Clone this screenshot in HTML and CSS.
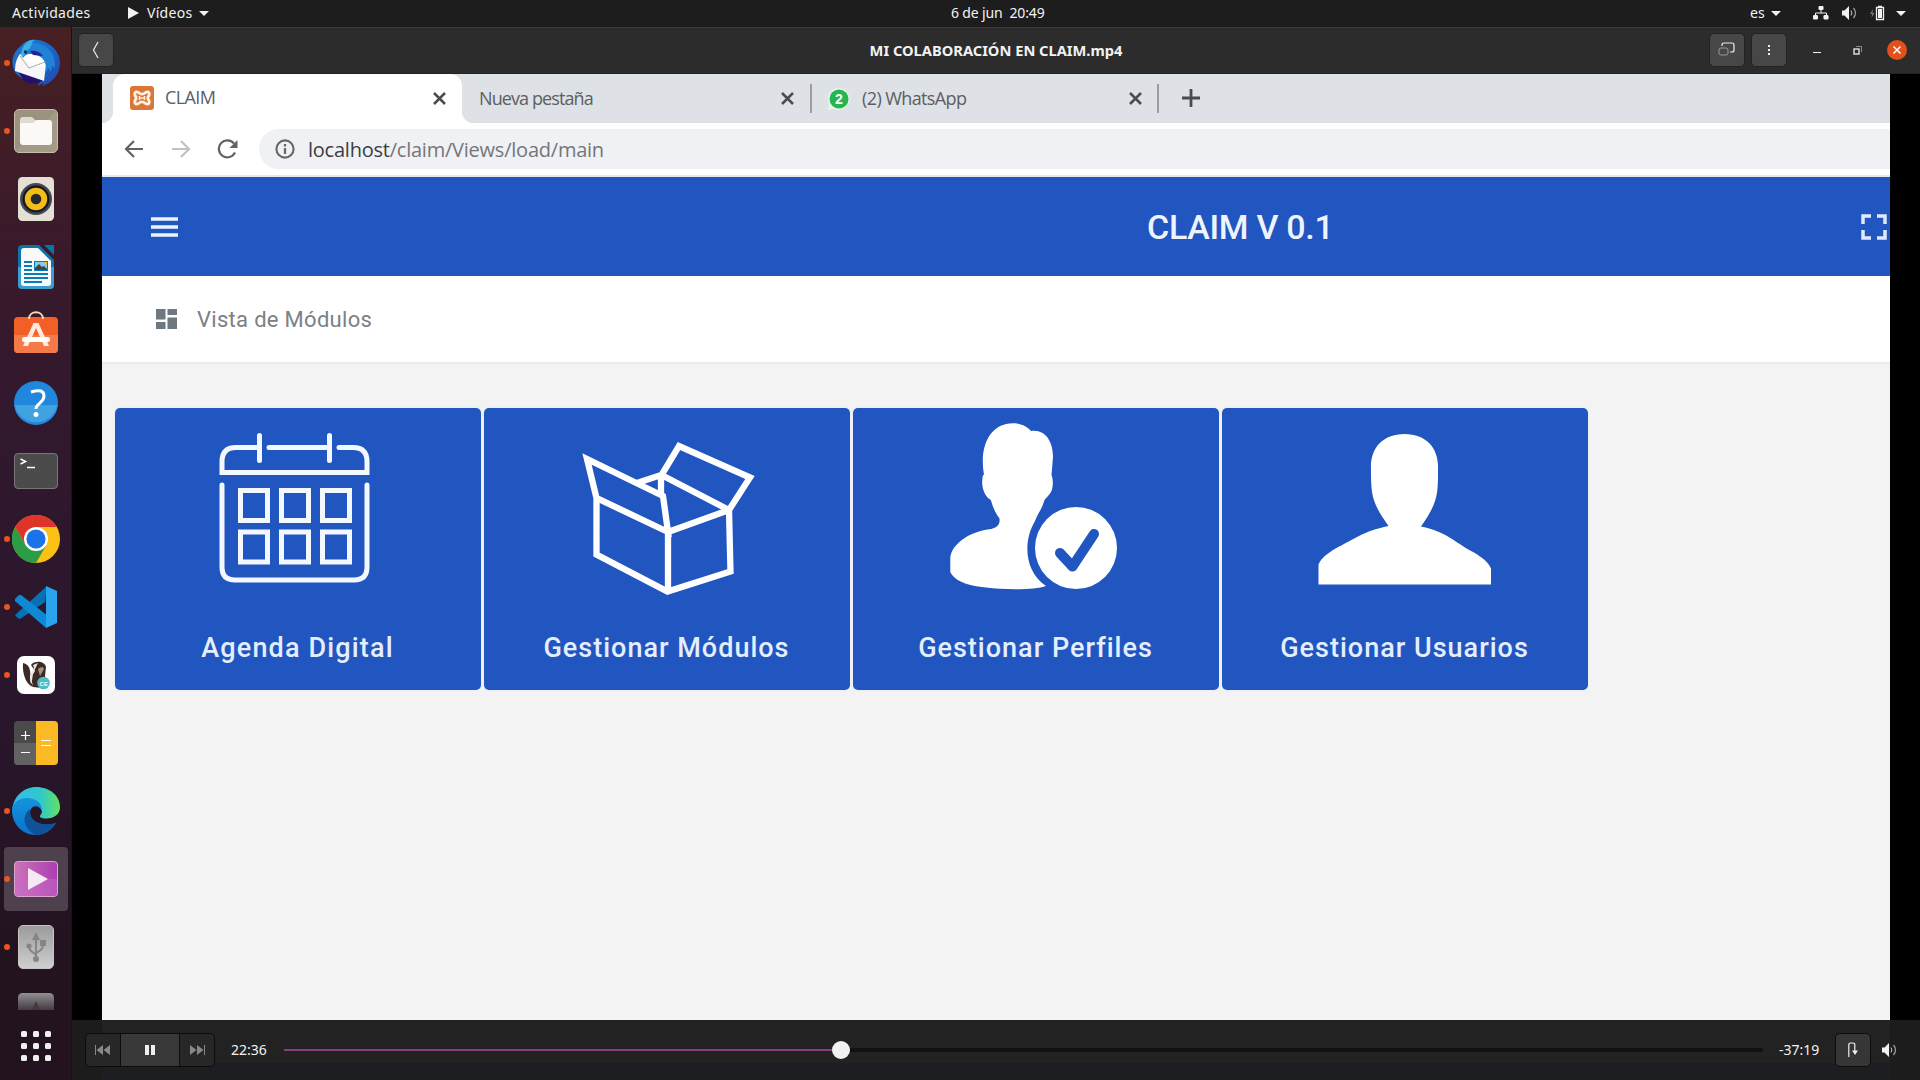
FILE: index.html
```
<!DOCTYPE html>
<html lang="es">
<head>
<meta charset="utf-8">
<title>MI COLABORACIÓN EN CLAIM.mp4</title>
<link rel="stylesheet" href="styles.css">
</head>
<body>
<header class="topbar">
  <span class="activities">Actividades</span>
  <svg class="app-play" width="11" height="12" viewBox="0 0 11 12"><path d="M0 0l11 6-11 6z" fill="#f2f2f2"/></svg>
  <span class="app-name">Vídeos</span>
  <svg class="caret" width="10" height="5" viewBox="0 0 10 5"><path d="M0 0h10L5 5z" fill="#f2f2f2"/></svg>
  <span class="clock">6 de jun&nbsp; 20:49</span>
  <span class="lang">es</span>
  <svg class="caret" width="10" height="5" viewBox="0 0 10 5"><path d="M0 0h10L5 5z" fill="#f2f2f2"/></svg>
  <svg class="net" width="16" height="14" viewBox="0 0 16 14"><path d="M8 4v3M2.500 10V7h11v3" fill="none" stroke="#f2f2f2"/><rect x="5.500" y="0" width="5" height="4" rx="1" fill="#f2f2f2"/><rect x="0" y="9" width="5" height="4.500" rx="1.200" fill="#f2f2f2"/><rect x="10.500" y="9" width="5" height="4.500" rx="1.200" fill="#f2f2f2"/></svg>
  <svg class="vol" width="15" height="14" viewBox="0 0 15 14"><path d="M0 4.500h2.500L7 0v14L2.500 9.500H0z" fill="#f2f2f2"/><path d="M9 4.500q1.800 2.500 0 5" fill="none" stroke="#ccc"/><path d="M11.500 2q4 5 0 10" fill="none" stroke="#999" stroke-width="1.300"/></svg>
  <svg class="bat" width="15" height="16" viewBox="0 0 15 16"><path d="M3 4L0 9h2l-.5 4L4.500 8h-2z" fill="#777"/><path d="M6.500 2.500h7v12h-7zM8 1.500h4" fill="none" stroke="#f2f2f2" stroke-width="1.300"/><path d="M8 4h4v9H8z" fill="#f2f2f2"/></svg>
  <svg class="caret" width="10" height="5" viewBox="0 0 10 5"><path d="M0 0h10L5 5z" fill="#f2f2f2"/></svg>
</header>

<div class="desktop">
<nav class="dock">
  <div class="dock-item running"><svg width="48" height="48" viewBox="0 0 48 48">
    <defs><linearGradient id="tb" x1="0" y1="0" x2="1" y2="1"><stop offset="0" stop-color="#1d78cf"/><stop offset=".55" stop-color="#1c62c9"/><stop offset="1" stop-color="#2347a8"/></linearGradient></defs>
    <path d="M10 6C15 0 25-.5 33 3c9 4 15 12 15 21 0 10-6 19-18 23l2-3-7 3 3-4C15 44 3 38 1 28-1 19 3 11 10 6z" fill="url(#tb)"/>
    <path d="M7 34l5 8c6 4 13 3 20-1L8 31z" fill="#25106b"/>
    <path d="M8 15l25 5 1 6-2 16L3 32c0-6 1-12 5-17z" fill="#f7f7f9"/>
    <path d="M10 17c5-3 17-3 22 0l1 10-16 1z" fill="#fff"/><path d="M8 17l9 12 16-6" fill="none" stroke="#aaa" stroke-width="1"/>
    <path d="M11 9C14 2 19 0 24 1l-4 3c14-1 24 10 23 25l-3-2-1 5-3-3-2 5c1-10-2-17-13-19-5-1-8 1-10 4z" fill="#1f82d4"/>
    <path d="M9 15C10 6 16 0 22 1c-3 3-2 6-5 9-3 2-4 6-7 9z" fill="#3bb1e6"/><circle cx="13.500" cy="13" r="1.800" fill="#17335b"/><path d="M18 12c6-1 11 2 13 5l-10-1z" fill="#25219c"/></svg></div>
  <div class="dock-item running"><svg width="48" height="48" viewBox="0 0 48 48"><rect x="2.500" y="2.500" width="43" height="43" rx="4.500" fill="#9b927f" stroke="#c4bead"/><path d="M3 45L45 3v39l-3 3z" fill="#a8a08d" opacity=".6"/><path d="M8 13q0-3 3-3h9l3 3h14v8H8z" fill="#dfdbd0"/><path d="M8 16h13l4-3h12q3 0 3 3v19q0 3-3 3H11q-3 0-3-3z" fill="#faf9f8"/></svg></div>
  <div class="dock-item"><svg width="48" height="48" viewBox="0 0 48 48"><rect x="6" y="2" width="36" height="44" rx="4.500" fill="#e4e0d6"/><circle cx="24" cy="24" r="16" fill="#444852"/><circle cx="24" cy="24" r="13.500" fill="#171722"/><circle cx="24" cy="24" r="11.200" fill="#f1bd16"/><circle cx="24" cy="24" r="5.300" fill="#28282a"/></svg></div>
  <div class="dock-item"><svg width="48" height="48" viewBox="0 0 48 48"><path d="M10 2h17l15 15v25q0 4-4 4H10q-4 0-4-4V6q0-4 4-4z" fill="#0e73a9"/><path d="M6 24h36v18q0 4-4 4H10q-4 0-4-4z" fill="#3a9fce"/><path d="M12 5h14l13 13v22q0 3-3 3H12q-3 0-3-3V8q0-3 3-3z" fill="#faf9fa"/><path d="M32 2h10v10z" fill="#0875a9"/><path d="M12 19h8M12 23h8M12 27h8M12 31h24M12 35h24M12 39h18" stroke="#087cba" stroke-width="1.800"/><path d="M22 18h14v10H22z" fill="#087cba"/><path d="M23 19h12v8H23z" fill="#85c9ed"/><path d="M23 27v-2l4-4 3 3 2-1 3 3v1z" fill="#444"/><path d="M32 19h3v3z" fill="#f5bd17"/></svg></div>
  <div class="dock-item"><svg width="48" height="48" viewBox="0 0 48 48"><rect x="2" y="6" width="44" height="36" rx="4" fill="#f26028"/><path d="M2 24h44v14q0 4-4 4H6q-4 0-4-4z" fill="#f47b49"/><path d="M17 8c0-9 14-9 14 0" fill="none" stroke="#f7dbb1" stroke-width="2"/><path d="M21.500 12h5L37 35h-5l-8-18-8 18h-5z" fill="#ffe9dd"/><rect x="10" y="26" width="28" height="5" rx="2.500" fill="#fff"/></svg></div>
  <div class="dock-item"><svg width="48" height="48" viewBox="0 0 48 48"><circle cx="24" cy="24" r="22" fill="#2187dc"/><path d="M2.500 26h43a22 22 0 0 1-43 0z" fill="#41a2e2"/><path d="M19 13q13-4 13 4c0 7-8 7-8 13" fill="none" stroke="#fff" stroke-width="3"/><circle cx="24" cy="35.500" r="2.500" fill="#fff"/></svg></div>
  <div class="dock-item"><svg width="48" height="48" viewBox="0 0 48 48"><rect x="2.500" y="6.500" width="43" height="35" rx="3.500" fill="#4b4b4b" stroke="#777"/><path d="M8.500 12l5 2.500-5 2.500M15 20.500h8" fill="none" stroke="#fff" stroke-width="1.600"/></svg></div>
  <div class="dock-item running"><svg width="48" height="48" viewBox="0 0 48 48"><circle cx="24" cy="24" r="24" fill="#fbc116"/><path d="M3.200 12A24 24 0 0 1 44.800 12H24L13.600 30z" fill="#df3529"/><path d="M3.200 12L13.600 30 24 36l10.400-6L24 48A24 24 0 0 1 3.200 12z" fill="#2c9c46"/><circle cx="24" cy="24" r="12" fill="#fff"/><circle cx="24" cy="24" r="9.600" fill="#1a73e8"/></svg></div>
  <div class="dock-item running"><svg width="48" height="48" viewBox="0 0 48 48"><path d="M3 32l32-29-2 16L8 36q-2 0-5-4z" fill="#0571b4"/><path d="M3 16l4-4h2l27 21-2 12L3 18z" fill="#1089d5"/><path d="M34 3l11 5v32l-11 5z" fill="#29a5f0"/></svg></div>
  <div class="dock-item running"><svg width="48" height="48" viewBox="0 0 48 48"><rect x="5" y="5" width="38" height="38" rx="7" fill="#fff"/><path d="M11 12c7 1 8 9 7 14 0 5 2 7 4 10-7-1-12-12-11-24z" fill="#3b2a25"/><path d="M19 14c3-4 13-5 15 2l-1 9 1 9-4 3-9-1-2-10 4-6z" fill="#3b2a25"/><path d="M21 14l5-2-3 6c-3 5-2 10-4 15-2-7 1-13 3-16z" fill="#e9e5df"/><path d="M26 18q5-4 6 0l-4 7z" fill="#a98f7c"/><circle cx="31.500" cy="32" r="6.300" fill="#51bbc1"/><text x="27.600" y="34.800" class="ce">CE</text></svg></div>
  <div class="dock-item"><svg width="48" height="48" viewBox="0 0 48 48"><path d="M6 2h18v44H6q-4 0-4-4V6q0-4 4-4z" fill="#4a4a4a"/><path d="M2 24h22v22H6q-4 0-4-4z" fill="#626262"/><path d="M24 2h18q4 0 4 4v36q0 4-4 4H24z" fill="#fbb925"/><path d="M9 16.500h9M13.500 12v9M9 33.500h9M29 21.500h10M29 26.500h10" stroke="#fff" stroke-width="1.200"/></svg></div>
  <div class="dock-item running"><svg width="48" height="48" viewBox="0 0 48 48"><defs><linearGradient id="ea"><stop offset="0" stop-color="#35b8ef"/><stop offset=".6" stop-color="#32c8cb"/><stop offset="1" stop-color="#61e35d"/></linearGradient><linearGradient id="eb" x1="0" y1="0" x2="0" y2="1"><stop offset="0" stop-color="#1593dd"/><stop offset="1" stop-color="#0873cc"/></linearGradient></defs><path d="M0 24C1 9 12 0 24 0c14 0 24 9 24 20 0 9-9 13-18 11-4-1-1-3 0-6 0-11-28-20-30-1z" fill="url(#ea)"/><path d="M0 23c0-7 7-12 15-12 9 0 15 5 15 13-3-7-11-6-12 1 0 10 13 16 26 11-5 8-12 12-20 12C10 48 0 37 0 23z" fill="url(#eb)"/><path d="M18 22c-2 13 13 18 26 14-5 8-13 12-20 12-14-7-14-20-6-26z" fill="#0d529a"/></svg></div>
  <div class="dock-item running active"><svg width="48" height="48" viewBox="0 0 48 48"><defs><linearGradient id="vi"><stop offset="0" stop-color="#cb74b7"/><stop offset="1" stop-color="#ac3eb2"/></linearGradient></defs><rect x="2.500" y="6.500" width="43" height="35" rx="3.500" fill="url(#vi)" stroke="#dda3d3"/><path d="M3 24h42v14q0 3-3 3H6q-3 0-3-3z" fill="#c86cc8" opacity=".5"/><path d="M16 13l20 11-20 11z" fill="#f7e9f4"/></svg></div>
  <div class="dock-item running"><svg width="48" height="48" viewBox="0 0 48 48"><defs><linearGradient id="us" x1="0" y1="0" x2="0" y2="1"><stop offset="0" stop-color="#9b9b9b"/><stop offset="1" stop-color="#cfcfcf"/></linearGradient></defs><rect x="6.500" y="2.500" width="35" height="43" rx="4.500" fill="url(#us)" stroke="#c5c5c5"/><g fill="#858585"><path d="M24 9l4 8h-8z"/><circle cx="24" cy="36" r="3"/><circle cx="17" cy="23" r="2.600"/><path d="M28 17h6v6h-6z"/></g><path d="M24 15v21M17 23c0 7 7 6 7 10M31 22c0 7-7 6-7 9" fill="none" stroke="#858585" stroke-width="2"/></svg></div>
  <div class="dock-cut"><svg width="48" height="48" viewBox="0 0 48 48"><defs><linearGradient id="fd" x1="0" y1="0" x2="0" y2="1"><stop offset="0" stop-color="#909090"/><stop offset=".42" stop-color="#3c3440"/></linearGradient></defs><rect x="6" y="2" width="36" height="44" rx="4.500" fill="url(#fd)"/><path d="M24 10l4 9h-8z" fill="#403944"/></svg></div>
  <div class="apps"><i></i><i></i><i></i><i></i><i></i><i></i><i></i><i></i><i></i></div>
</nav>

<main class="window">
  <div class="titlebar">
    <div class="tbtn back"><svg width="8" height="18" viewBox="0 0 8 18"><path d="M6 1L1.500 9 6 17" fill="none" stroke="#eee" stroke-width="1.200"/></svg></div>
    <h1 class="wtitle">MI COLABORACIÓN EN CLAIM.mp4</h1>
    <div class="tbtn"><svg width="18" height="16" viewBox="0 0 18 16"><path d="M4 4V3q0-2 2-2h8q2 0 2 2v5q0 2-2 2h-2" fill="none" stroke="#eee" stroke-width="1.200"/><rect x="1" y="6" width="9" height="7" rx="2" fill="none" stroke="#999"/></svg></div>
    <div class="tbtn"><svg width="2" height="10" viewBox="0 0 2 10"><path d="M0 0h2v2H0zM0 4h2v2H0zM0 8h2v2H0z" fill="#eee"/></svg></div>
    <svg class="min" width="8" height="10" viewBox="0 0 8 10"><path d="M0 7.500h8" stroke="#eee"/></svg>
    <svg class="restore" width="9" height="9" viewBox="0 0 9 9"><path d="M3 .5h5.500V6" fill="none" stroke="#888"/><rect x="1" y="3" width="5" height="5" fill="none" stroke="#eee" stroke-width="1.300"/></svg>
    <svg class="close" width="20" height="20" viewBox="0 0 20 20"><circle cx="10" cy="10" r="10" fill="#e2501c"/><path d="M6.500 6.500l7 7M13.500 6.500l-7 7" stroke="#fff" stroke-width="1.500"/></svg>
  </div>

  <div class="video">
    <div class="page">
      <div class="tabs">
        <div class="tab current">
          <svg class="fav" width="24" height="24" viewBox="0 0 24 24"><rect width="24" height="24" rx="3" fill="#d9773b"/><path d="M8.500 6.500C5 4.500 3.500 8 6 11v2c-2.500 3-1 6.500 2.500 4.500 2-2 5-2 7 0C19 19.500 20.500 16 18 13v-2c2.500-3 1-6.500-2.500-4.500-2 2-5 2-7 0z" fill="none" stroke="#fff0df" stroke-width="2.800"/><path d="M9.500 10v4M14.500 10v4M9.500 12h5" stroke="#fff0df" stroke-width="1.600"/></svg>
          <span class="tname t1">CLAIM</span>
          <svg class="x" width="13" height="13" viewBox="0 0 13 13"><path d="M1 1l11 11M12 1L1 12"/></svg>
        </div>
        <div class="tab second"><span class="tname t2">Nueva pestaña</span><svg class="x" width="13" height="13" viewBox="0 0 13 13"><path d="M1 1l11 11M12 1L1 12"/></svg></div>
        <div class="tab third">
          <svg class="fav" width="24" height="24" viewBox="0 0 24 24"><path d="M12 1a11 11 0 1 1-5 21l-6 1 1-6A11 11 0 0 1 12 1z" fill="#e4f5e9"/><circle cx="12" cy="12" r="9.500" fill="#26b64f"/><text x="8" y="17" class="badge">2</text></svg>
          <span class="tname t3">(2) WhatsApp</span><svg class="x" width="13" height="13" viewBox="0 0 13 13"><path d="M1 1l11 11M12 1L1 12"/></svg></div>
        <svg class="plus" width="18" height="18" viewBox="0 0 18 18"><path d="M9 0v18M0 9h18" stroke="#4a4c50" stroke-width="2.800"/></svg>
      </div>
      <div class="toolbar">
        <svg width="20" height="20" viewBox="0 0 20 20"><path d="M19 10H2M10 2l-8 8 8 8" fill="none" stroke="#606266" stroke-width="2.200"/></svg>
        <svg width="20" height="20" viewBox="0 0 20 20"><path d="M1 10h17M10 2l8 8-8 8" fill="none" stroke="#c0c1c3" stroke-width="2.200"/></svg>
        <svg class="reload" width="22" height="20" viewBox="0 0 22 20"><path d="M18 13.500A8.500 8.500 0 1 1 17 4.500" fill="none" stroke="#606266" stroke-width="2.200"/><path d="M20.500 1v8h-8z" fill="#606266"/></svg>
        <div class="url"><svg width="20" height="20" viewBox="0 0 20 20"><circle cx="10" cy="10" r="8.600" fill="none" stroke="#65676b" stroke-width="2.100"/><path d="M10 9v6M10 5v2.500" stroke="#65676b" stroke-width="2.300"/></svg><span class="addr"><b>localhost</b>/claim/Views/load/main</span></div>
      </div>
      <div class="appbar">
        <svg class="menu" width="27" height="20" viewBox="0 0 27 20"><path d="M0 2h27M0 10h27M0 18h27" stroke="#edf3ff" stroke-width="3.400"/></svg>
        <span class="brand">CLAIM V 0.1</span>
        <svg class="full" width="26" height="26" viewBox="0 0 26 26"><path d="M2 10V2h8M16 2h8v8M24 16v8h-8M10 24H2v-8" fill="none" stroke="#dfeaff" stroke-width="3.500"/></svg>
      </div>
      <div class="crumb">
        <svg width="21" height="20" viewBox="0 0 21 20"><path d="M0 0h9.500v10.500H0zM11.500 0H21v6h-9.500zM0 13h9.500v7H0zM11.500 8.500H21V20h-9.500z" fill="#6f7780"/></svg>
        <span>Vista de Módulos</span>
      </div>
      <div class="cards">
        <div class="card"><svg width="366" height="210" viewBox="0 0 366 210"><g fill="none" stroke="#f3f8ff" stroke-width="5" stroke-linecap="round"><path d="M144.500 27.500v25M214.500 27.500v25M142 39.500h-21q-14 0-14 14v11h145v-11q0-14-14-14h-14M154 39.500h58M107 77v82q0 13 13 13h119q13 0 13-13V77"/><path d="M125.500 82.500h27v30h-27zM166.500 82.500h27v30h-27zM207.500 82.500h27v30h-27zM125.500 124h27v30h-27zM166.500 124h27v30h-27zM207.500 124h27v30h-27z"/></g></svg><span class="l1">Agenda Digital</span></div>
        <div class="card"><svg width="366" height="210" viewBox="0 0 366 210"><g fill="none" stroke="#fff" stroke-width="6.300"><path d="M112.500 90L103 51l76 37 5 36-71.500-34v56.500l71 37 63-20L245 102l-61 22v59"/><path d="M245 102l-67.500-35L195 38l71 31.500L245 102M153 75l24-8v20"/></g></svg><span class="l2">Gestionar Módulos</span></div>
        <div class="card"><svg width="366" height="210" viewBox="0 0 366 210"><path d="M131 67C126 38 137 15.300 160 15.300c8 0 14 3 18 7.700 14-2 22 10 22 26l-1.500 18c2 5 1.500 12 0 16-2 4-5 6-7 9-3 10-6 12-9.500 21-12 20-11 50 11 65-11 4-40 4-60 1.500-22-2-32-8-35.700-15.500v-14c1-14 20-27 41-29 8-2 9-7 8-11-4-5-6-10-8.500-18-8-5-10-16-7.800-25z" fill="#fff"/><circle cx="223" cy="140" r="41" fill="#fff"/><path d="M207 145l12.500 13.500L241 126" fill="none" stroke="#2156c0" stroke-width="10" stroke-linecap="round" stroke-linejoin="round"/></svg><span class="l3">Gestionar Perfiles</span></div>
        <div class="card"><svg width="366" height="210" viewBox="0 0 366 210"><path d="M149 61c-1-20 11-35 33.500-35s34.500 15 33.500 35c0 26 0 33-17 57.500 26 5 35 17 53 26 8 5 14 9 17 16V176.500H96.500v-20c3-7 9-11 17-16 18-9 27-17 53-22.500-17-24-17.500-31-17.500-57z" fill="#fff"/></svg><span class="l4">Gestionar Usuarios</span></div>
      </div>
    </div>
  </div>

  <div class="controls">
    <div class="group">
      <div class="cbtn"><svg width="16" height="10" viewBox="0 0 16 10"><path d="M.5 0v10" stroke="#888"/><path d="M8 0v10L1.500 5zM15 0v10L8.500 5z" fill="#888"/></svg></div>
      <div class="cbtn pause"><svg width="10" height="10" viewBox="0 0 10 10"><path d="M0 0h4v10H0zM6 0h4v10H6z" fill="#eee"/></svg></div>
      <div class="cbtn"><svg width="16" height="10" viewBox="0 0 16 10"><path d="M15.500 0v10" stroke="#888"/><path d="M8 0v10l6.500-5zM1 0v10l6.500-5z" fill="#888"/></svg></div>
    </div>
    <span class="time elapsed">22:36</span>
    <div class="slider"><div class="fill"></div><div class="knob"></div><div class="rest"></div></div>
    <span class="time left">-37:19</span>
    <div class="repeat"><svg width="10" height="16" viewBox="0 0 10 16"><path d="M.8 15V3q0-2 2-2h2q2 0 2 2v6" fill="none" stroke="#eee" stroke-width="1.200"/><path d="M4 8.500h6L7 13z" fill="#eee"/></svg></div>
    <svg class="cvol" width="15" height="14" viewBox="0 0 15 14"><path d="M0 4.500h2.500L7 0v14L2.500 9.500H0z" fill="#f2f2f2"/><path d="M9 4.500q1.800 2.500 0 5" fill="none" stroke="#ccc"/><path d="M11.500 2q4 5 0 10" fill="none" stroke="#999" stroke-width="1.300"/></svg>
  </div>
</main>
</div>
</body>
</html>
```
FILE: styles.css
```
* { box-sizing: border-box; }
body { margin: 0; width: 1920px; height: 1080px; overflow: hidden; background: #000; font-family: "Noto Sans", sans-serif; font-size: 14px; color: #f2f2f2; display: flex; flex-direction: column; }
svg { display: block; flex: none; }
span, h1 { white-space: nowrap; }

/* GNOME top bar */
.topbar { height: 27px; flex: none; background: #1d1d1d; display: flex; align-items: center; padding: 0 0 1px 12px; line-height: 26px; }
.activities { width: 116px; letter-spacing: .35px; }
.app-play { margin-right: 8px; }
.app-name { width: 52px; letter-spacing: .3px; }
.clock { margin-left: 742px; width: 799px; letter-spacing: -.15px; }
.lang { width: 21px; }
.net { margin-left: 32px; }
.vol { margin-left: 13px; }
.bat { margin-left: 13px; margin-right: 11px; }

.desktop { display: flex; flex: 1; min-height: 0; }

/* Dock */
.dock { width: 72px; flex: none; padding: 4px 0 0 4px; display: flex; flex-direction: column; gap: 4px; background: linear-gradient(#482023 0, #3a1a2b 20%, #30182d 40%, #2a162c 65%, #22131f 90%, #22131f 100%); border-right: 1px solid #1b1017; }
.dock-item { width: 64px; height: 64px; flex: none; position: relative; display: grid; place-items: center; border-radius: 4px; }
.dock-item.active { background: #4f404d; }
.dock-item.running::before { content: ""; position: absolute; left: 0; top: 29px; width: 6px; height: 6px; border-radius: 50%; background: #e95420; }
.dock-cut { height: 27px; width: 64px; flex: none; overflow: hidden; padding: 8px; }
.ce { font: bold 6px "Liberation Sans", sans-serif; fill: #e8ffff; }
.apps { display: grid; grid-template-columns: repeat(3, 6px); gap: 6px; padding: 17px 0 0 17px; }
.apps i { width: 6px; height: 6px; border-radius: 1.500px; background: #f0f0ee; }

/* Player window */
.window { flex: 1; min-width: 0; display: flex; flex-direction: column; }
.titlebar { height: 47px; flex: none; background: #2c2c2c; border-top: 1px solid #3b3b3b; border-bottom: 1px solid #222; display: flex; align-items: center; padding: 0 13px 1px 6px; }
.tbtn { width: 36px; height: 34px; flex: none; background: #474747; border: 1px solid #222; border-radius: 5px; display: grid; place-items: center; margin-right: 6px; }
.tbtn.back { margin-right: 0; }
.wtitle { flex: 1; margin: 0; padding-left: 169px; text-align: center; font-size: 14.670px; font-weight: 700; }
.min { margin-left: 20px; }
.restore { margin: 0 26px 0 32px; }
.close { margin-left: -1px; }
.video { height: 946px; flex: none; background: #000; padding: 0 30px; }
.page { height: 946px; background: #f3f3f3; overflow: hidden; font-family: "Open Sans", sans-serif; }

/* Browser tabs */
.tabs { height: 49px; background: #dee1e5; display: flex; padding-left: 11px; }
.tab { display: flex; align-items: center; width: 348px; height: 49px; }
.tab.current { width: 349px; background: #fff; border-radius: 12px 12px 0 0; padding: 0 0 1px 17px; position: relative; }
.tab.current::before, .tab.current::after { content: ""; position: absolute; bottom: 0; width: 12px; height: 12px; }
.tab.current::before { left: -12px; background: radial-gradient(circle at 0 0, transparent 12px, #fff 12.500px); }
.tab.current::after { right: -12px; background: radial-gradient(circle at 100% 0, transparent 12px, #fff 12.500px); }
.tab .x { margin-left: auto; margin-right: 16px; }
.x path { fill: none; stroke: #4a4c50; stroke-width: 2.500; }
.second, .third { height: 29px; margin-top: 10px; border-right: 2px solid #9a9da2; }
.second { width: 350px; padding-left: 17px; }
.third { width: 347px; padding-left: 15px; }
.third .x { margin-right: 15px; }
.tname { color: #5c5e62; font-size: 18px; line-height: 22px; padding-bottom: 2px; }
.t1 { margin-left: 11px; letter-spacing: -.6px; }
.t2 { letter-spacing: -.9px; }
.t3 { margin-left: 11px; letter-spacing: -.6px; }
.badge { font: bold 14px "Liberation Sans", sans-serif; fill: #fff; }
.plus { margin: 15px 0 0 23px; }
.toolbar { height: 54px; background: #fff; border-bottom: 2px solid #e6e8ec; display: flex; align-items: center; padding-left: 22px; gap: 27px; }
.reload { margin-left: -1px; }
.url { flex: 1; height: 40px; margin-left: -7px; border-radius: 20px 0 0 20px; background: #f0f1f5; display: flex; align-items: center; padding-left: 16px; }
.addr { margin-left: 13px; font-size: 20px; color: #74767a; letter-spacing: -.23px; }
.addr b { font-weight: 400; color: #3b3d41; }

/* Web application */
.appbar { height: 99px; background: #2156c0; display: flex; align-items: center; padding: 0 3px 0 49px; font-family: Roboto, sans-serif; }
.brand { margin-left: 969px; font-size: 34px; font-weight: 500; color: #eef4ff; letter-spacing: -.3px; }
.full { margin-left: auto; }
.crumb { height: 88px; background: #fff; border-bottom: 2px solid #ebebeb; display: flex; align-items: center; padding-left: 54px; gap: 20px; font-family: Roboto, sans-serif; font-size: 22px; color: #7c8086; letter-spacing: .3px; }
.cards { display: flex; gap: 3px; padding: 44px 0 0 12.500px; font-family: Roboto, sans-serif; }
.card { width: 366px; height: 282px; flex: none; border-radius: 5px; background: #2156c0; display: flex; flex-direction: column; align-items: center; box-shadow: 0 0 2px #d8e6ff; }
.card span { line-height: 36px; margin-top: 12px; font-size: 27px; font-weight: 500; color: #e4eeff; letter-spacing: 1px; }
.card .l1 { letter-spacing: 1.150px; }

/* Playback controls */
.controls { flex: 1; background: linear-gradient(#222 0 43px, #1d1e22 43px) 30px 0 / 1788px 100% no-repeat #1c1c1c; display: flex; align-items: center; padding-left: 13px; }
.group { display: flex; height: 34px; border: 1px solid #0c0c0c; border-radius: 5px; background: #272727; }
.cbtn { width: 34px; display: grid; place-items: center; }
.pause { width: 60px; background: #383838; border: solid #0c0c0c; border-width: 0 1px; }
.time { line-height: 20px; }
.elapsed { margin-left: 16px; width: 53px; }
.slider { width: 1479px; flex: none; height: 18px; display: flex; align-items: center; }
.fill { width: 548px; height: 2px; background: #87407f; }
.knob { width: 18px; height: 18px; border-radius: 50%; background: #f2f2f2; }
.rest { flex: 1; height: 4px; border-radius: 0 2px 2px 0; background: #111; }
.left { width: 56px; margin-left: 16px; }
.repeat { width: 36px; height: 34px; background: #363636; border: 1px solid #0c0c0c; border-radius: 5px; display: grid; place-items: center; }
.cvol { margin-left: 11px; }
```
